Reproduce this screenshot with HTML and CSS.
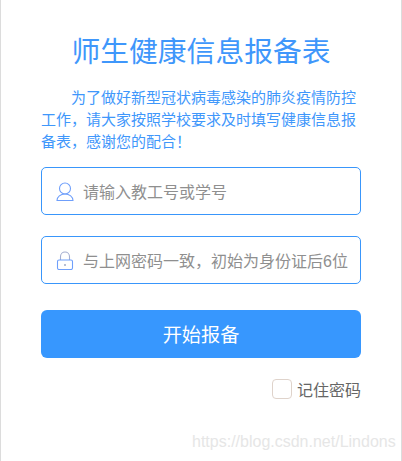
FILE: index.html
```html
<!DOCTYPE html>
<html lang="zh">
<head>
<meta charset="utf-8">
<title>师生健康信息报备表</title>
<link rel="stylesheet" href="styles.css">
</head>
<body>
<main class="page">
  <h1 class="title">师生健康信息报备表</h1>
  <p class="intro">为了做好新型冠状病毒感染的肺炎疫情防控工作，请大家按照学校要求及时填写健康信息报备表，感谢您的配合！</p>
  <div class="field">
    <svg class="icon" viewBox="0 0 18 20" aria-hidden="true"><circle cx="9" cy="7.500" r="5.500"/><path d="M1 19.500c0-3.800 3.500-6.500 8-6.500s8 2.700 8 6.500z"/></svg>
    <span class="placeholder">请输入教工号或学号</span>
  </div>
  <div class="field">
    <svg class="icon" viewBox="0 0 18 20" aria-hidden="true"><path class="shackle" d="M4.500 10V6.500a4.500 4.500 0 0 1 9 0V10"/><rect x="1.500" y="10" width="15" height="9.500" rx="1.500"/><path class="keyhole" d="M9 14v2"/></svg>
    <span class="placeholder">与上网密码一致，初始为身份证后6位</span>
  </div>
  <button class="submit" type="button">开始报备</button>
  <label class="remember"><span class="box"></span><span>记住密码</span></label>
</main>
<div class="watermark">https://blog.csdn.net/Lindons</div>
</body>
</html>
```
FILE: styles.css
```css
* { box-sizing: border-box; }
html, body { margin: 0; height: 100%; }
body {
  background: #fff;
  font-family: "Liberation Sans", "Noto Sans CJK SC", sans-serif;
  overflow: hidden;
  position: relative;
}
.page {
  height: 461px;
  border-left: 1px solid #dcdcdc;
  border-right: 1px solid #dcdcdc;
  padding: 32px 40px 0;
  display: flex;
  flex-direction: column;
}
.title {
  margin: 0;
  text-align: center;
  font-size: 28.800px;
  font-weight: 400;
  line-height: 40px;
  color: #3f97fb;
}
.intro {
  margin: 15px 0 0;
  font-size: 15px;
  line-height: 22px;
  text-indent: 2em;
  color: #3f97fb;
}
.field {
  height: 48px;
  margin-top: 21px;
  border: 1px solid #3996fb;
  border-radius: 5px;
  display: flex;
  align-items: center;
  padding-left: 14px;
  gap: 9px;
  overflow: hidden;
}
.intro + .field { margin-top: 14px; }
.icon {
  width: 18px;
  height: 20px;
  flex: none;
  fill: none;
  stroke: #6f9ffb;
  stroke-width: 1.100;
}
.shackle { stroke: #a4aed0; }
.keyhole { stroke: #7c8ab0; }
.placeholder {
  font-size: 16px;
  color: #8f8f8f;
  white-space: nowrap;
}
.submit {
  height: 48px;
  margin-top: 26px;
  border: 0;
  border-radius: 6px;
  background: #3797fe;
  color: #fff;
  font: inherit;
  font-size: 19.200px;
}
.remember {
  margin-top: 19px;
  display: flex;
  justify-content: flex-end;
  align-items: center;
  gap: 5px;
  font-size: 16px;
  color: #666;
}
.box {
  width: 20px;
  height: 20px;
  border: 1px solid #dfd3cb;
  border-radius: 4px;
  background: #fff;
}
.watermark {
  position: absolute;
  left: 192px;
  top: 432px;
  font-size: 16px;
  line-height: 20px;
  color: #e6e6e6;
  white-space: nowrap;
}
```
